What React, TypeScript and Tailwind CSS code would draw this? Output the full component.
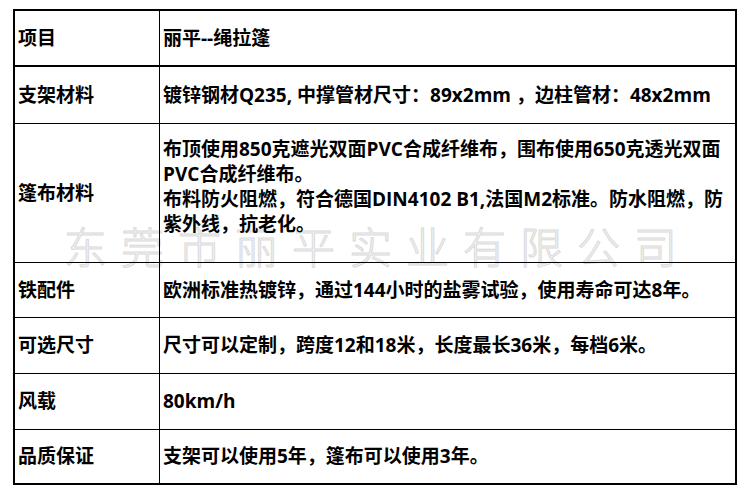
const rows: { label: string; lines: string[]; h: string; top?: boolean }[] = [
  { label: '项目', lines: ['丽平--绳拉篷'], h: 'h-[56px] border-b-2' },
  {
    label: '支架材料',
    lines: ['镀锌钢材Q235, 中撑管材尺寸：89x2mm ，边柱管材：48x2mm'],
    h: 'h-[57px] border-b',
  },
  {
    label: '篷布材料',
    lines: [
      '布顶使用850克遮光双面PVC合成纤维布，围布使用650克透光双面',
      'PVC合成纤维布。',
      '布料防火阻燃，符合德国DIN4102 B1,法国M2标准。防水阻燃，防',
      '紫外线，抗老化。',
    ],
    h: 'h-[139px] border-b',
    top: true,
  },
  {
    label: '铁配件',
    lines: ['欧洲标准热镀锌，通过144小时的盐雾试验，使用寿命可达8年。'],
    h: 'h-[55px] border-b',
  },
  {
    label: '可选尺寸',
    lines: ['尺寸可以定制，跨度12和18米，长度最长36米，每档6米。'],
    h: 'h-[56px] border-b',
  },
  { label: '风载', lines: ['80km/h'], h: 'h-[56px] border-b' },
  { label: '品质保证', lines: ['支架可以使用5年，篷布可以使用3年。'], h: 'h-[53px]' },
]

export default function App() {
  return (
    <div
      className="relative h-[492px] w-[752px] overflow-hidden bg-white pt-[9px] pl-[13px] text-black"
      style={{ fontFamily: '"Open Sans", "Noto Sans CJK SC", sans-serif' }}
    >
      {/* watermark */}
      <div
        className="pointer-events-none absolute top-[224px] left-[64px] z-0 whitespace-nowrap text-[43px] leading-none font-light tracking-[14px] text-[#f4f4f4] [-webkit-text-stroke:1px_#dadada]"
        style={{ fontFamily: '"Noto Sans CJK SC", sans-serif' }}
      >
        东莞市丽平实业有限公司
      </div>

      <div className="relative z-10 flex w-[724px] flex-col border-2 border-black">
        {rows.map((row) => (
          <div key={row.label} className={`flex border-black ${row.h}`}>
            <div className="flex w-[145px] shrink-0 items-center border-r border-black pl-[3px] text-[19px] font-bold">
              {row.label}
            </div>
            <div
              className={`flex flex-1 pl-[3px] text-[19px] leading-[25px] font-bold ${
                row.top ? 'items-start pt-[13px]' : 'items-center'
              }`}
            >
              <div>
                {row.lines.map((line) => (
                  <div key={line} className="whitespace-nowrap">
                    {line}
                  </div>
                ))}
              </div>
            </div>
          </div>
        ))}
      </div>
    </div>
  )
}
